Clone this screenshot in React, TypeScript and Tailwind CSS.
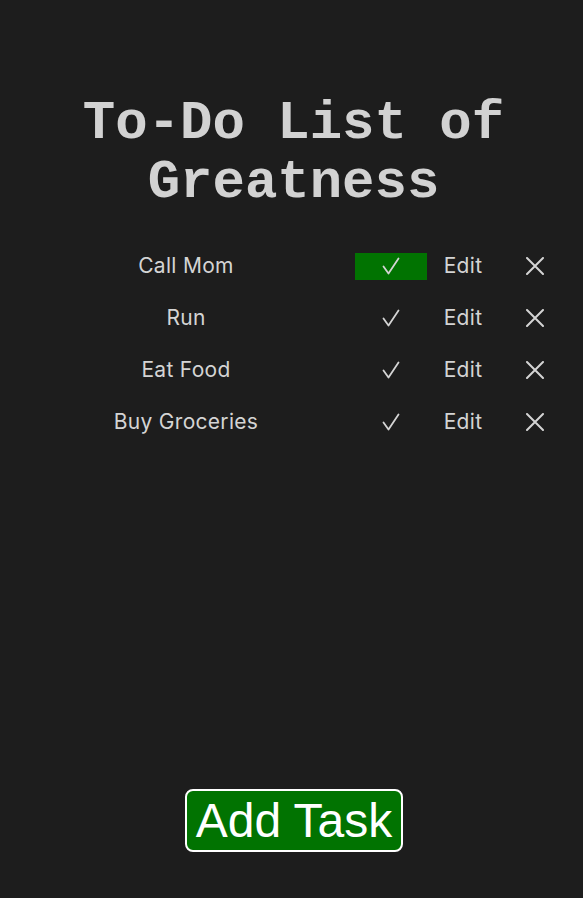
import { useState } from "react";

interface Task {
  name: string;
  done: boolean;
}

const CheckIcon = () => (
  <svg width="18" height="18" viewBox="0 0 18 18" fill="none">
    <path d="M1.5 9.5 L6.5 16.5 L16.5 1.5" stroke="currentColor" strokeWidth="1.8" strokeLinecap="round" strokeLinejoin="round" />
  </svg>
);

const CrossIcon = () => (
  <svg width="18" height="18" viewBox="0 0 18 18" fill="none">
    <path d="M1 1 L17 17 M17 1 L1 17" stroke="currentColor" strokeWidth="2" strokeLinecap="round" />
  </svg>
);

const App = () => {
  const [tasks, setTasks] = useState<Task[]>([
    { name: "Call Mom", done: true },
    { name: "Run", done: false },
    { name: "Eat Food", done: false },
    { name: "Buy Groceries", done: false },
  ]);

  const toggle = (idx: number) => {
    setTasks(tasks.map((t, i) => (i === idx ? { ...t, done: !t.done } : t)));
  };

  const remove = (idx: number) => {
    setTasks(tasks.filter((_, i) => i !== idx));
  };

  return (
    <div className="min-h-screen bg-[#1d1d1d] text-[#d4d4d4] flex flex-col items-center pt-[94px] pb-[46px]">
      <h1 className="ml-[4px] font-['Liberation_Mono','Courier_New',monospace] font-bold text-[54px] leading-[59px] text-center text-[#d2d2d2] w-[480px]">
        To-Do List of Greatness
      </h1>

      <ul className="mt-[28px] self-start ml-[100px] font-['Inter','Noto_Sans',sans-serif] text-[21px] tracking-[0.3px]">
        {tasks.map((task, idx) => (
          <li key={idx} className="flex items-center h-[52px]">
            <span className="w-[172px] text-center">{task.name}</span>
            <button
              className={`ml-[83px] w-[72px] h-[27px] flex items-center justify-center ${
                task.done ? "bg-[#017301]" : ""
              }`}
              onClick={() => toggle(idx)}
            >
              <CheckIcon />
            </button>
            <button className="ml-[8px] w-[56px] text-center">Edit</button>
            <button
              className="ml-[24px] w-[40px] flex items-center justify-center"
              onClick={() => remove(idx)}
            >
              <CrossIcon />
            </button>
          </li>
        ))}
      </ul>

      <button className="mt-auto ml-[5px] bg-[#017301] border-2 border-white rounded-[8px] px-[9px] py-[3px] font-['Liberation_Sans',Arial,sans-serif] text-[48px] leading-[53px] text-white">
        Add Task
      </button>
    </div>
  );
};

export default App;
